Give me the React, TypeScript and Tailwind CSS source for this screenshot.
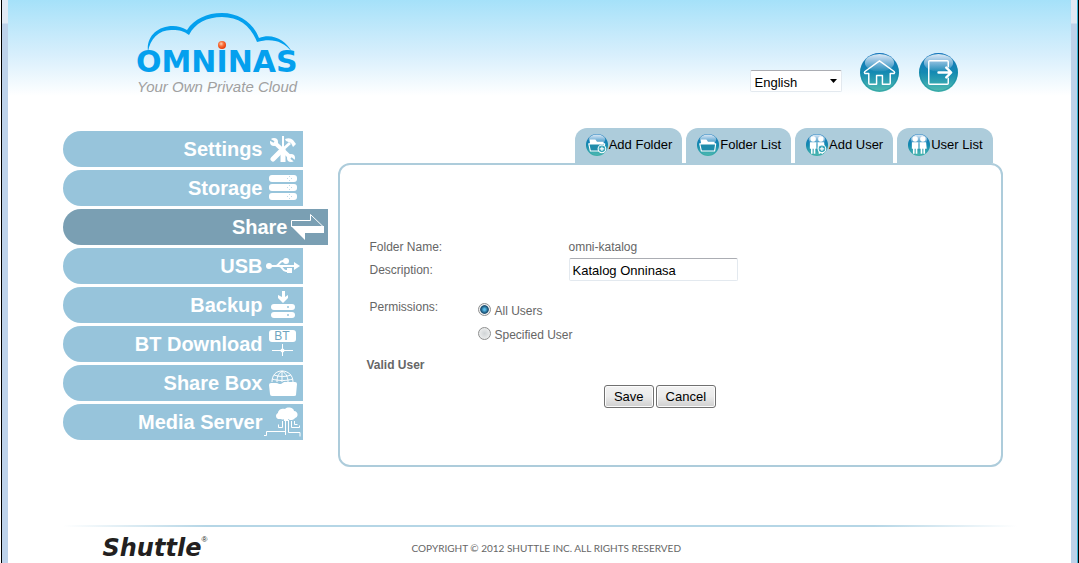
import React, { useId, useState } from "react";
import clsx from "clsx";

interface NavItem {
  label: string;
  icon: React.ReactNode;
}

interface TabItem {
  label: string;
  icon: React.ReactNode;
}

const LANGUAGES = ["English", "Deutsch", "Polski"];

const DriveDots = ({ y }: { y: number }) => (
  <g fill="#97c4db">
    <rect x="20" y={y - 2} width="1" height="1" />
    <rect x="20" y={y + 2} width="1" height="1" />
    <rect x="18" y={y} width="1" height="1" />
    <rect x="22" y={y} width="1" height="1" />
  </g>
);

const SettingsIcon = () => (
  <svg width="26" height="28" viewBox="0 0 26 28" fill="none" stroke="#fff">
    <path d="M5 8 21 23" strokeWidth="4" />
    <circle cx="4" cy="7" r="4" fill="#fff" stroke="none" />
    <circle cx="21" cy="23" r="4" fill="#fff" stroke="none" />
    <path d="M-1 4 4 7M26 27l-5-4" stroke="#97c4db" strokeWidth="2" />
    <path d="M20 8 10 17" strokeWidth="3" />
    <path d="M10 17 3 24" strokeWidth="5" strokeLinecap="round" />
    <path d="M15 4q5-2 8 1l3 4-3 3-2-4-5-2z" fill="#fff" stroke="none" />
    <path d="M13 1v14" strokeWidth="2" />
    <path d="M13 14v13" strokeWidth="5" />
  </svg>
);

const StorageIcon = () => (
  <svg width="28" height="26" viewBox="0 0 28 26" fill="#fff">
    <rect width="28" height="7" rx="3" />
    <rect y="9" width="28" height="7" rx="3" />
    <rect y="18" width="28" height="7" rx="3" />
    <g opacity="0.6">
      <DriveDots y={3} />
      <DriveDots y={12} />
      <DriveDots y={21} />
    </g>
  </svg>
);

const ShareIcon = () => (
  <svg width="33" height="28" viewBox="0 0 33 28">
    <path d="M.5 13.500V7.500H19.500V1.500L32 13.500Z" fill="none" stroke="#fff" />
    <path d="M0 13H33V20H14V27Z" fill="#fff" />
  </svg>
);

const UsbIcon = () => (
  <svg width="34" height="16" viewBox="0 0 34 16" fill="none" stroke="#fff" strokeWidth="2">
    <path d="M3 8h26M10 8c3 0 3-5 7-5h3M13 8c4 0 3 5 7 5h3" />
    <circle cx="3" cy="8" r="3" fill="#fff" stroke="none" />
    <circle cx="20" cy="3" r="3" fill="#fff" stroke="none" />
    <path d="M21 10h5v5h-5zM28 4l6 4-6 4z" fill="#fff" stroke="none" />
  </svg>
);

const BackupIcon = () => (
  <svg width="24" height="28" viewBox="0 0 24 28" fill="#fff">
    <path d="M11 0h3v6l3-2v3l-5 5-5-5V4l4 2z" />
    <rect y="13" width="24" height="6" rx="3" />
    <rect y="21" width="24" height="6" rx="3" />
    <g fill="#97c4db">
      <circle cx="17" cy="16" r="1" />
      <circle cx="17" cy="24" r="1" />
    </g>
  </svg>
);

const BtIcon = () => (
  <svg width="27" height="28" viewBox="0 0 27 28">
    <rect width="27" height="12" rx="3" fill="#fff" />
    <text x="13" y="10" textAnchor="middle" fontSize="12" fontWeight="400" className="fill-[#6fa5c0] font-['Liberation_Sans',sans-serif]">BT</text>
    <path d="M13.500 14v12M3 20.500h21" stroke="#fff" />
    <circle cx="13.500" cy="20.500" r="2" fill="#fff" />
  </svg>
);

const ShareBoxIcon = () => (
  <svg width="28" height="27" viewBox="0 0 28 27">
    <path
      d="M3 12C3 5 7 1 13 1s11 4 11 11M13 1v11M5 5c5 2 12 2 17 0M3 9c7 2 14 2 21 0M13 1C9 4 8 7 8 12M13 1c5 3 6 7 6 11"
      fill="none"
      stroke="#fff"
    />
    <path d="M0 15q0-2 2-2h5q2 0 3 1l2 0 3-2h11q2 0 2 2l-1 11q0 1-2 1H3q-2 0-2-2z" fill="#fff" />
  </svg>
);

const MediaServerIcon = () => (
  <svg width="38" height="31" viewBox="0 0 38 31" fill="none" stroke="#fff">
    <path
      d="M17 12c-6 1-6-5-3-6 0-4 5-5 7-4 3-3 9-1 9 2 4 0 5 6 1 7-2 3-6 2-7 1v2h-4v-2q-1 1-3 0z"
      fill="#fff"
      stroke="none"
    />
    <path d="M21.500 13v15M24.500 13v12.500h11.500v4M18.500 14v6.500h-4v-3M27.500 14v6.500h8v-2M30.500 14v3.500h3M21 24.500H2.500V28.500H0" />
  </svg>
);

const NAV_ITEMS: NavItem[] = [
  { label: "Settings", icon: <SettingsIcon /> },
  { label: "Storage", icon: <StorageIcon /> },
  { label: "Share", icon: <ShareIcon /> },
  { label: "USB", icon: <UsbIcon /> },
  { label: "Backup", icon: <BackupIcon /> },
  { label: "BT Download", icon: <BtIcon /> },
  { label: "Share Box", icon: <ShareBoxIcon /> },
  { label: "Media Server", icon: <MediaServerIcon /> },
];

// Glossy round badge, drawn on a 40 unit canvas
const Orb = ({ size, children }: { size: number; children: React.ReactNode }) => {
  const id = useId();
  return (
    <svg width={size} height={size} viewBox="0 0 40 40" className="shrink-0">
      <defs>
        <linearGradient id={`${id}b`} x1="0" y1="0" x2="0" y2="1">
          <stop offset="0" stopColor="#1670c4" />
          <stop offset="0.5" stopColor="#148ab2" />
          <stop offset="1" stopColor="#52bdb0" />
        </linearGradient>
        <linearGradient id={`${id}g`} x1="0" y1="0" x2="0" y2="1">
          <stop offset="0" stopColor="#fff" stopOpacity="0.85" />
          <stop offset="1" stopColor="#fff" stopOpacity="0.05" />
        </linearGradient>
      </defs>
      <circle cx="20" cy="20" r="20" fill={`url(#${id}b)`} />
      <circle cx="20" cy="20" r="19" fill="none" stroke="#128a9c" strokeOpacity="0.5" />
      <ellipse cx="20" cy="10" rx="15" ry="9" fill={`url(#${id}g)`} />
      {children}
    </svg>
  );
};

const FolderGlyph = () => (
  <g fill="#fff">
    <path d="M7 10h10l3 4h12v4H7z" />
    <path d="M5 18h29l-2 13H8z" fill="#1f8cab" stroke="#fff" strokeWidth="2" strokeLinejoin="round" />
  </g>
);

const UsersGlyph = () => (
  <g fill="#fff">
    <circle cx="13" cy="9" r="5" />
    <circle cx="27" cy="9" r="5" />
    <path d="M7 15h12v12h-2v9h-3v-9h-2v9H9v-9H7zM21 15h12l1 12h-3v9h-3v-9h-2v9h-3v-9h-2z" />
  </g>
);

const PlusGlyph = () => (
  <g>
    <circle cx="29" cy="27" r="7" fill="#3aa5b8" stroke="#fff" strokeWidth="2" />
    <path d="M25 27h8M29 23v8" stroke="#fff" strokeWidth="2" />
  </g>
);

const TABS: TabItem[] = [
  { label: "Add Folder", icon: <><FolderGlyph /><PlusGlyph /></> },
  { label: "Folder List", icon: <FolderGlyph /> },
  { label: "Add User", icon: <><UsersGlyph /><PlusGlyph /></> },
  { label: "User List", icon: <UsersGlyph /> },
];

const Logo = () => (
  <svg width="168" height="88" viewBox="136 10 168 88" role="img" aria-label="Omninas">
    <defs>
      <radialGradient id="spark" cx="0.4" cy="0.35" r="0.6">
        <stop offset="0" stopColor="#ffd0b0" />
        <stop offset="0.5" stopColor="#f9703a" />
        <stop offset="1" stopColor="#e8420e" />
      </radialGradient>
    </defs>
    <path
      d="M148 52C146 37 157 26 173 26Q180 26 187 30C194 19 207 13 222 13C240 13 254 24 259 38C273 33 285 40 292 52C283 41 272 38 257 42C251 26 239 17 222 17C207 17 195 23 189 35C184 31 179 30 173 30C160 29 150 38 148 52Z"
      fill="#04a0ee"
    />
    <circle cx="222" cy="45" r="4" fill="url(#spark)" />
    <text x="136" y="72" fontSize="30" fontWeight="700" className="fill-[#04a0ee] font-['DejaVu_Sans',sans-serif]">OMNINAS</text>
    <text x="137" y="92" fontSize="15" fontStyle="italic" className="fill-[#a0a0a0] font-['Liberation_Sans',sans-serif]">Your Own Private Cloud</text>
  </svg>
);

const Header = () => (
  <header className="flex h-32 items-start justify-between pr-[59px] pl-[73px]">
    <a href="#home" className="mt-2.5">
      <Logo />
    </a>
    <div className="mt-[53px] flex items-end">
      <div className="relative mr-[18px]">
        <select
          aria-label="Language"
          className="block h-[22px] w-[92px] appearance-none rounded-xs border border-[#e3e9ef] border-t-[#abadb3] bg-white pt-0.5 pl-1 text-[13px] leading-5 text-black"
        >
          {LANGUAGES.map((lang) => (
            <option key={lang}>{lang}</option>
          ))}
        </select>
        <svg className="pointer-events-none absolute top-[9px] right-[5px]" width="7" height="4" viewBox="0 0 7 4">
          <path d="M0 0h7L3.500 4z" />
        </svg>
      </div>
      <a href="#main" aria-label="Home" className="mr-5">
        <Orb size={39}>
          <path
            d="M20 8 5 19q-1 1 0 2h4v10q0 1 1 1h7v-9h6v9h7q1 0 1-1V21h4q1-1 0-2z"
            fill="none"
            stroke="#fff"
            strokeWidth="1.500"
            strokeLinejoin="round"
          />
        </Orb>
      </a>
      <a href="#logout" aria-label="Log out">
        <Orb size={39}>
          <g fill="none" stroke="#fff" strokeLinejoin="round" strokeLinecap="round">
            <path d="M30 14V9q0-1-1-1H11q-1 0-1 1v22q0 1 1 1h18q1 0 1-1v-5" strokeWidth="1.500" />
            <path d="M20 20h12M28 15l5 5-5 5" strokeWidth="2.500" />
          </g>
        </Orb>
      </a>
    </div>
  </header>
);

const Sidebar = () => (
  <nav className="mt-[3px] flex w-[275px] shrink-0 flex-col items-start gap-[3px]">
    {NAV_ITEMS.map(({ label, icon }) => {
      const active = label === "Share";
      return (
        <a
          key={label}
          href={`#${label}`}
          className={clsx(
            "flex h-9 items-center justify-end rounded-l-full text-xl font-bold text-white",
            active ? "w-[265px] bg-[#7a9fb3]" : "w-60 bg-[#97c4db]"
          )}
        >
          {label}
          <span className="flex w-10 justify-center">{icon}</span>
        </a>
      );
    })}
  </nav>
);

const inputClass =
  "h-[23px] w-[169px] rounded-xs border border-[#e3e9ef] border-t-[#abadb3] bg-white px-[3px] pt-0.5 text-[13px] text-black";
const radioClass =
  "mt-px size-[13px] appearance-none rounded-full border border-[#8e8f8f] bg-radial from-[#d0d4d6] to-[#f6f6f6] checked:from-[#5cc0ee] checked:from-10% checked:via-[#12486b] checked:via-50% checked:to-[#f0f0f0] checked:to-60%";
const buttonClass =
  "h-[23px] rounded-[3px] border border-[#707070] bg-linear-to-b from-[#f2f2f2] from-0% via-[#ebebeb] via-50% to-[#cfcfcf] px-[9px] pt-px text-[13px] leading-5 text-black inset-ring inset-ring-[#fcfcfc]";

const FolderForm = () => {
  const [description, setDescription] = useState("Katalog Onninasa");
  const [access, setAccess] = useState("All Users");

  return (
    <form
      className="h-[304px] rounded-xl border-2 border-[#adccdb] pt-[71px] pl-[30px] text-xs text-[#666]"
      onSubmit={(e) => e.preventDefault()}
    >
      <div className="flex h-[22px] items-center">
        <span className="w-[199px]">Folder Name:</span>
        <span>omni-katalog</span>
      </div>
      <div className="flex h-[23px] items-center">
        <label htmlFor="description" className="w-[199px]">Description:</label>
        <input
          id="description"
          type="text"
          value={description}
          onChange={(e) => setDescription(e.target.value)}
          className={inputClass}
        />
      </div>
      <fieldset className="mt-4 flex">
        <legend className="float-left w-[108px] pt-0.5">Permissions:</legend>
        <div className="flex flex-col gap-2 pt-[5px]">
          {["All Users", "Specified User"].map((option) => (
            <label key={option} className="flex gap-1">
              <input
                type="radio"
                name="access"
                checked={access === option}
                onChange={() => setAccess(option)}
                className={radioClass}
              />
              <span className="pt-0.5 leading-3.5">{option}</span>
            </label>
          ))}
        </div>
      </fieldset>
      <h2 className="mt-[15px] -ml-[3px] font-bold">Valid User</h2>
      <div className="mt-3 -ml-[30px] flex justify-center gap-0.5 pr-5">
        <button type="submit" className={buttonClass}>Save</button>
        <button type="button" className={buttonClass}>Cancel</button>
      </div>
    </form>
  );
};

const Footer = () => (
  <footer className="mt-[58px]">
    <div className="h-0.5 bg-[linear-gradient(to_right,transparent,#b5d6e6_15%,#b5d6e6_85%,transparent)]" />
    <div className="flex items-center pt-[7px] pl-10">
      <div className="flex w-[309px] items-start text-[#231f20]">
        <span className="font-['DejaVu_Sans',sans-serif] text-2xl leading-7 font-bold italic">Shuttle</span>
        <span className="text-[8px]">®</span>
      </div>
      <p className="font-['Lato',sans-serif] text-[10px] text-[#666]">
        COPYRIGHT © 2012 SHUTTLE INC. ALL RIGHTS RESERVED
      </p>
    </div>
  </footer>
);

export default function App() {
  return (
    <div className="flex min-h-screen font-['Liberation_Sans',Arial,sans-serif]">
      <div className="w-2 shrink-0 border-l border-white">
        <div className="h-full border-l border-black bg-linear-to-b from-[#e0e9f4] from-[23px] to-[#bdd2ea] to-[24px]" />
      </div>
      <div className="min-w-0 flex-1 bg-linear-to-b from-[#a5e1f9] from-0% via-[#d8effc] via-[55px] to-white to-[96px]">
        <div className="mx-auto max-w-[954px]">
          <Header />
          <div className="flex items-start">
            <Sidebar />
            <main className="min-w-0 flex-1 pr-3.5">
              <div className="flex justify-end gap-1 pr-2.5">
                {TABS.map(({ label, icon }) => (
                  <a
                    key={label}
                    href={`#${label}`}
                    className="flex h-[35px] items-center gap-px rounded-t-xl bg-[#adccdb] pr-2.5 pb-0.5 pl-[11px] text-[13px] text-black"
                  >
                    <Orb size={22}>{icon}</Orb>
                    {label}
                  </a>
                ))}
              </div>
              <FolderForm />
            </main>
          </div>
          <Footer />
        </div>
      </div>
      <div className="w-2 shrink-0 border-r border-black">
        <div className="h-full border-r border-[#35b5d8] bg-linear-to-b from-[#e0e9f4] from-[23px] to-[#bdd2ea] to-[24px]" />
      </div>
    </div>
  );
}
